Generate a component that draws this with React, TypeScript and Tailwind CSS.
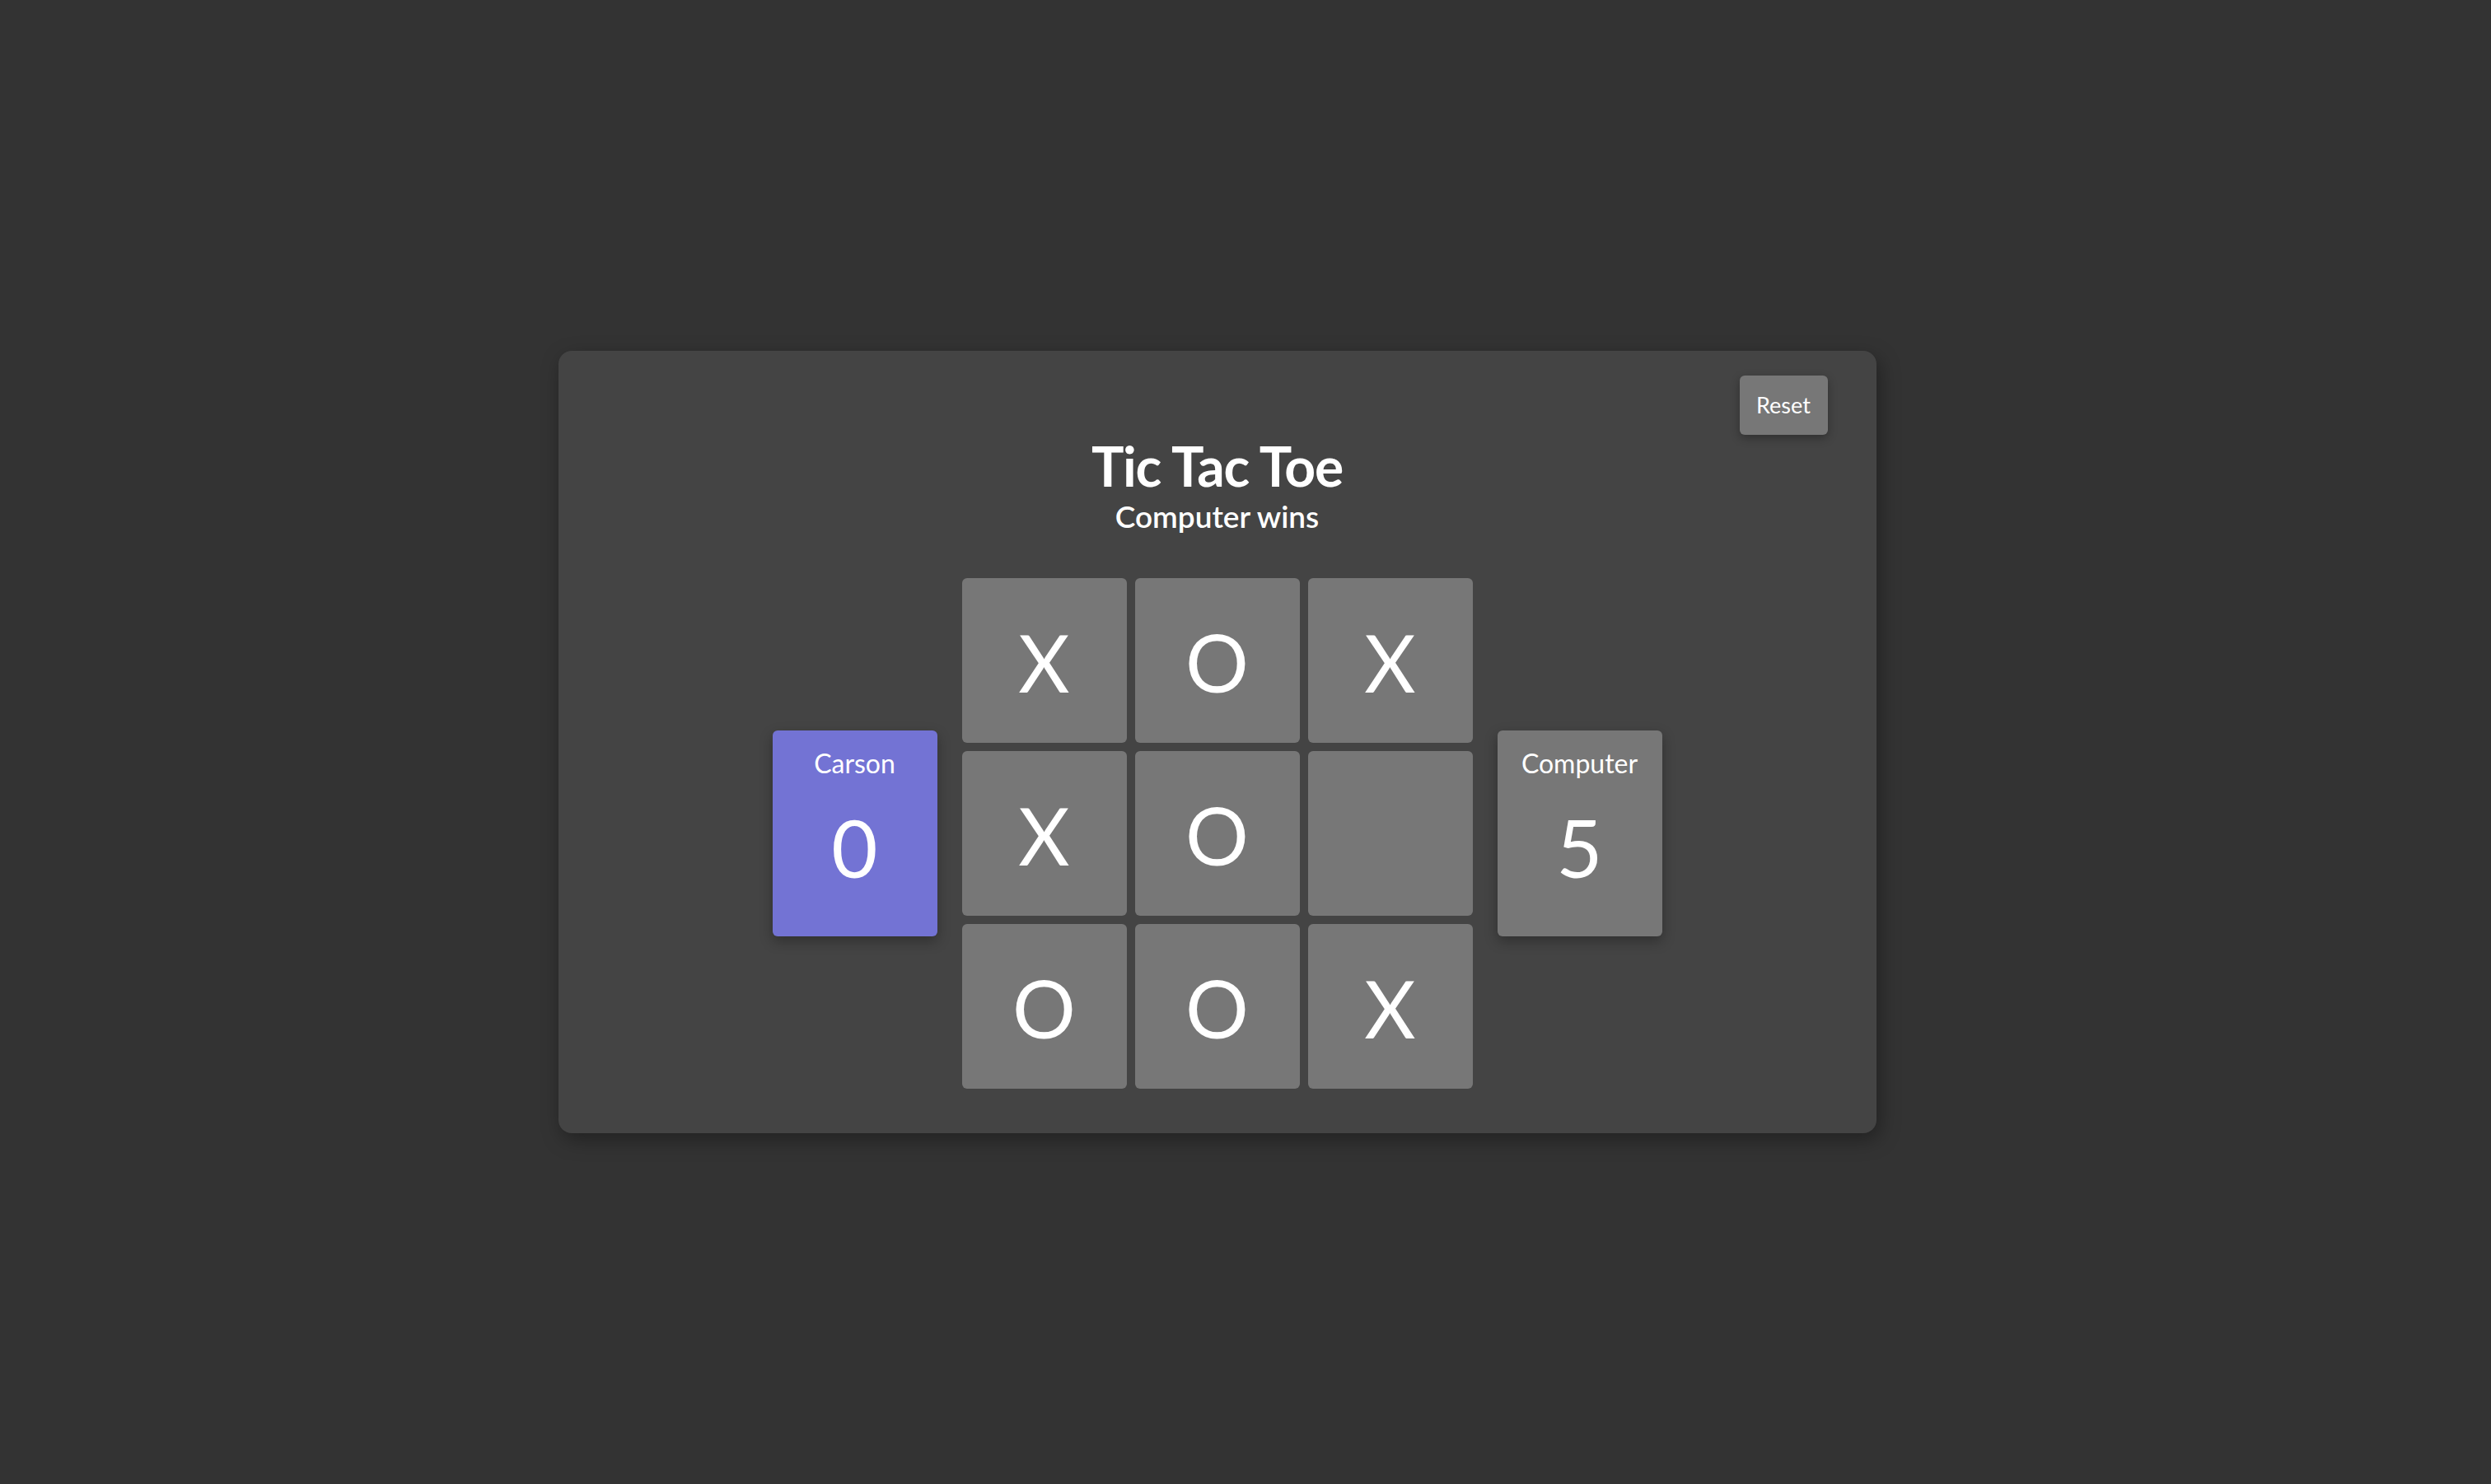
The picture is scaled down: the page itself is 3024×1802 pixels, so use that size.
const board: string[] = ['X', 'O', 'X', 'X', 'O', '', 'O', 'O', 'X']

function ScoreCard({ name, score, active }: { name: string; score: number; active?: boolean }) {
  return (
    <div
      className={
        active
          ? 'flex h-[250px] w-[200px] flex-col items-center rounded-[6px] bg-[#7373d4] pt-[21px] shadow-[0_6px_16px_rgba(0,0,0,0.3)]'
          : 'flex h-[250px] w-[200px] flex-col items-center rounded-[6px] bg-[#777777] pt-[21px] shadow-[0_6px_16px_rgba(0,0,0,0.3)]'
      }
    >
      <p className="text-[32px] leading-[1.2]">{name}</p>
      <p className="mt-[25px] text-[97px] leading-[1.2]">{score}</p>
    </div>
  )
}

export default function App() {
  return (
    <main
      className="flex min-h-[1802px] items-center justify-center bg-[#333333] pr-[69px] text-white"
      style={{ fontFamily: 'Lato, "Noto Sans", sans-serif' }}
    >
      <section className="flex w-[1600px] flex-col items-center rounded-[16px] bg-[#444444] pb-[54px] pt-[30px] shadow-[4px_8px_24px_rgba(0,0,0,0.35)]">
        <div className="flex w-full justify-end pr-[59px]">
          <button className="h-[72px] w-[107px] rounded-[6px] bg-[#777777] text-[27px] text-white shadow-[0_4px_12px_rgba(0,0,0,0.3)]">
            Reset
          </button>
        </div>

        <h1 className="-mt-[2px] text-[66px] font-bold leading-[1.2] tracking-[-1.2px]">Tic Tac Toe</h1>
        <h2 className="text-[37px] font-semibold leading-[1.2]">Computer wins</h2>

        <div className="mt-[52px] flex items-center gap-[30px]">
          <ScoreCard name="Carson" score={0} active />

          <div className="grid grid-cols-[repeat(3,200px)] grid-rows-[repeat(3,200px)] gap-[10px]">
            {board.map((cell, i) => (
              <div
                key={i}
                className="flex items-center justify-center rounded-[6px] bg-[#777777] pt-[5px] text-[96px] leading-none"
              >
                {cell}
              </div>
            ))}
          </div>

          <ScoreCard name="Computer" score={5} />
        </div>
      </section>
    </main>
  )
}
